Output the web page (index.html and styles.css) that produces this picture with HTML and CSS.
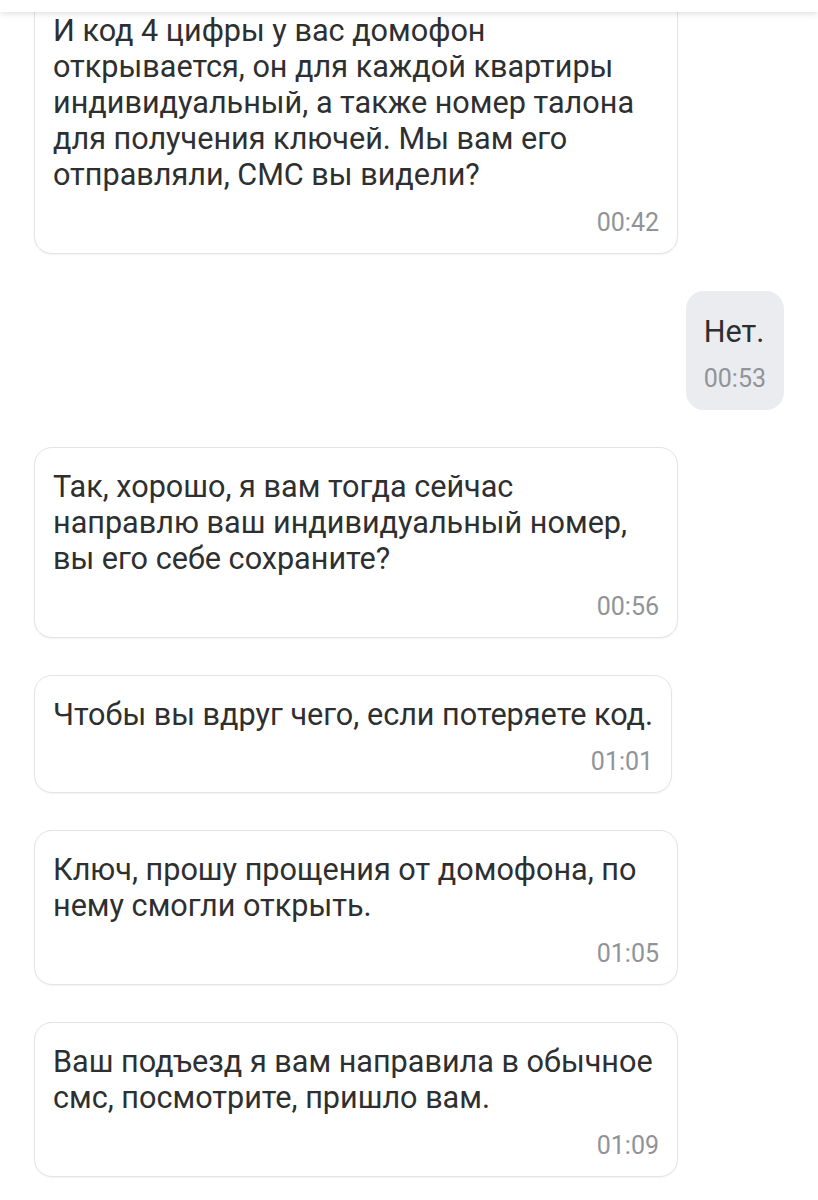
FILE: index.html
```html
<!DOCTYPE html>
<html lang="ru">
<head>
<meta charset="utf-8">
<title>Чат</title>
<link rel="stylesheet" href="styles.css">
</head>
<body>
<header class="appbar"></header>
<main class="chat">
  <div class="msg msg--in msg--wide">
    <p class="msg__text">И код 4 цифры у вас домофон<br>открывается, он для каждой квартиры<br>индивидуальный, а также номер талона<br>для получения ключей. Мы вам его<br>отправляли, СМС вы видели?</p>
    <div class="msg__time">00:42</div>
  </div>
  <div class="msg msg--out">
    <p class="msg__text">Нет.</p>
    <div class="msg__time">00:53</div>
  </div>
  <div class="msg msg--in msg--wide">
    <p class="msg__text">Так, хорошо, я вам тогда сейчас<br>направлю ваш индивидуальный номер,<br>вы его себе сохраните?</p>
    <div class="msg__time">00:56</div>
  </div>
  <div class="msg msg--in">
    <p class="msg__text">Чтобы вы вдруг чего, если потеряете код.</p>
    <div class="msg__time">01:01</div>
  </div>
  <div class="msg msg--in msg--wide">
    <p class="msg__text">Ключ, прошу прощения от домофона, по<br>нему смогли открыть.</p>
    <div class="msg__time">01:05</div>
  </div>
  <div class="msg msg--in msg--wide">
    <p class="msg__text">Ваш подъезд я вам направила в обычное<br>смс, посмотрите, пришло вам.</p>
    <div class="msg__time">01:09</div>
  </div>
</main>
</body>
</html>
```
FILE: styles.css
```css
* { box-sizing: border-box; }
html, body { margin: 0; padding: 0; background: #fff; }
body {
  font-family: "Roboto", "Noto Sans", "Liberation Sans", sans-serif;
  color: #2e2f30;
  overflow: hidden;
  height: 1200px;
}
.appbar {
  position: fixed;
  top: 0; left: 0; right: 0;
  height: 12px;
  background: #fff;
  box-shadow: 0 2px 6px rgba(0,0,0,0.12);
  z-index: 2;
}
.chat {
  display: flex;
  flex-direction: column;
  gap: 37px;
  padding: 0 34px;
  margin-top: -9px;
}
.msg {
  border-radius: 18px;
  max-width: 644px;
}
.msg--in {
  align-self: flex-start;
  padding: 21px 18px 15px;
  background: #fff;
  border: 1px solid #e3e4e6;
  box-shadow: 0 1px 2px rgba(0,0,0,0.05);
}
.msg--wide { width: 644px; }
.msg--wide .msg__text { line-height: 36px; }
.msg--out {
  align-self: flex-end;
  padding: 23px 18px 16px;
  background: #ebecef;
}
.msg__text {
  margin: 0;
  font-size: 30.6px;
  line-height: 35px;
  white-space: nowrap;
}
.msg__time {
  margin-top: 15px;
  font-size: 25px;
  line-height: 30px;
  color: #909499;
  text-align: right;
}
```
